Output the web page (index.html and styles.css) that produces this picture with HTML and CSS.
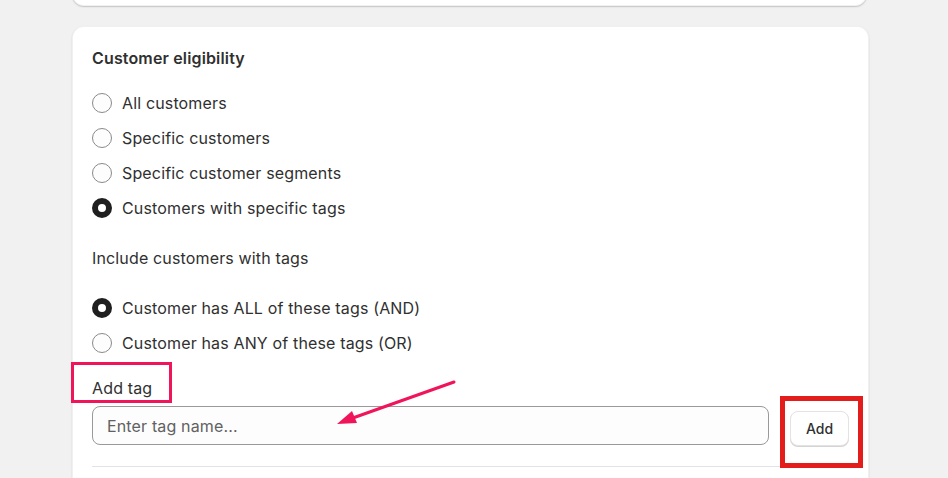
FILE: index.html
```html
<!DOCTYPE html>
<html lang="en">
<head>
<meta charset="utf-8">
<link rel="stylesheet" href="styles.css">
</head>
<body>
<div class="page">
  <div class="card card-top"></div>
  <div class="card card-main">
    <h2 class="title">Customer eligibility</h2>
    <div class="radios">
      <label class="radio"><span class="dot"></span><span>All customers</span></label>
      <label class="radio"><span class="dot"></span><span>Specific customers</span></label>
      <label class="radio"><span class="dot"></span><span>Specific customer segments</span></label>
      <label class="radio"><span class="dot checked"></span><span>Customers with specific tags</span></label>
    </div>
    <p class="sub">Include customers with tags</p>
    <div class="radios radios-2">
      <label class="radio"><span class="dot checked"></span><span>Customer has ALL of these tags (AND)</span></label>
      <label class="radio"><span class="dot"></span><span>Customer has ANY of these tags (OR)</span></label>
    </div>
    <p class="field-label">Add tag</p>
    <div class="field-row">
      <div class="input">Enter tag name...</div>
      <button class="btn">Add</button>
    </div>
    <div class="divider"></div>
  </div>
</div>
<div class="anno anno-pink"></div>
<div class="anno anno-red"></div>
<svg class="anno arrow" width="948" height="478" viewBox="0 0 948 478">
  <line x1="454" y1="382" x2="350" y2="419" stroke="#f0145a" stroke-width="3" stroke-linecap="round"/>
  <polygon points="337,424 352,411 357,423" fill="#f0145a"/>
</svg>
</body>
</html>
```

FILE: styles.css
```css
html, body {
  margin: 0;
  padding: 0;
  background: #f1f1f1;
  font-family: Inter, "Noto Sans", sans-serif;
  color: #303030;
  width: 948px;
  height: 478px;
  overflow: hidden;
  position: relative;
}
.page {
  padding: 0 79px 0 72px;
  display: flex;
  flex-direction: column;
  gap: 20px;
  margin-top: -40px;
}
.card {
  background: #fff;
  border-radius: 12px;
  box-shadow: 0 1px 0 rgba(0,0,0,0.07), 0 0 0 1px rgba(0,0,0,0.06) inset, 0 1px 2px rgba(0,0,0,0.12);
}
.card-top {
  height: 46px;
  margin-right: 2px;
}
.card-main {
  padding: 20px 20px 24px;
  letter-spacing: 0.15px;
}
.title {
  margin: 0;
  font-size: 16px;
  font-weight: 600;
  line-height: 24px;
}
.radios {
  display: flex;
  flex-direction: column;
  margin-top: 15px;
}
.radios-2 {
  margin-top: 20px;
}
.radio {
  display: flex;
  align-items: center;
  gap: 10px;
  height: 35px;
  font-size: 16px;
}
.dot {
  width: 20px;
  height: 20px;
  box-sizing: border-box;
  border-radius: 50%;
  border: 1px solid #8a8a8a;
  background: #fdfdfd;
  flex: none;
}
.dot.checked {
  border: 6px solid #1f1f1f;
  background: #fff;
}
.sub {
  margin: 21px 0 0;
  font-size: 16px;
  line-height: 24px;
}
.field-label {
  margin: 16px 0 0;
  font-size: 16px;
  line-height: 24px;
}
.field-row {
  display: flex;
  align-items: flex-start;
  gap: 21px;
  margin-top: 6px;
}
.input {
  flex: 1;
  height: 39px;
  box-sizing: border-box;
  border: 1px solid #999;
  border-radius: 8px;
  background: #fdfdfd;
  padding: 0 14px;
  display: flex;
  align-items: center;
  font-size: 16px;
  color: #616161;
}
.btn {
  margin-top: 5px;
  width: 59px;
  height: 35px;
  border: 1px solid #e3e3e3;
  border-radius: 8px;
  background: #fff;
  box-shadow: 0 1px 0 #d4d4d4;
  font-family: Inter, sans-serif;
  font-size: 14px;
  font-weight: 550;
  color: #303030;
  padding: 0;
}
.divider {
  margin-top: 20px;
  height: 1px;
  background: #e3e3e3;
}
.anno {
  position: absolute;
  pointer-events: none;
}
.anno-pink {
  left: 71px;
  top: 362px;
  width: 101px;
  height: 41px;
  box-sizing: border-box;
  border: 3px solid #f0145a;
}
.anno-red {
  left: 780px;
  top: 396px;
  width: 83px;
  height: 72px;
  box-sizing: border-box;
  border: 5px solid #e31c1c;
}
.arrow {
  left: 0;
  top: 0;
}
```
